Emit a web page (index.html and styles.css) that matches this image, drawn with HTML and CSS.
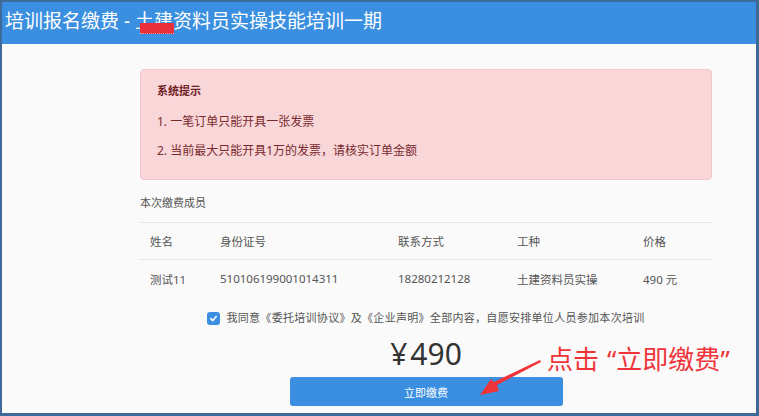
FILE: index.html
```html
<!DOCTYPE html>
<html lang="zh-CN">
<head>
  <meta charset="UTF-8">
  <meta name="viewport" content="width=device-width, initial-scale=1.0">
  <title>培训报名缴费</title>
  <link rel="stylesheet" href="styles.css">
</head>
<body>
  <div class="frame">
    <!-- Header -->
    <div class="topbar">
      培训报名缴费 - <span class="masked">土建</span>资料员实操技能培训一期
    </div>

    <div class="main">
      <!-- Notice -->
      <div class="alert">
        <p class="alert-title">系统提示</p>
        <p>1. 一笔订单只能开具一张发票</p>
        <p>2. 当前最大只能开具1万的发票，请核实订单金额</p>
      </div>

      <!-- Members -->
      <div class="section-title">本次缴费成员</div>
      <div class="members">
        <div class="row head">
          <span>姓名</span>
          <span>身份证号</span>
          <span>联系方式</span>
          <span>工种</span>
          <span>价格</span>
        </div>
        <div class="row">
          <span>测试11</span>
          <span>510106199001014311</span>
          <span>18280212128</span>
          <span>土建资料员实操</span>
          <span>490 元</span>
        </div>
      </div>

      <label class="agree">
        <span class="checkbox">
          <svg width="9" height="9" viewBox="0 0 10 10"><path d="M2 5.2 L4.2 7.3 L8 2.8" fill="none" stroke="#fff" stroke-width="1.8" stroke-linecap="round" stroke-linejoin="round"/></svg>
        </span>
        我同意《委托培训协议》及《企业声明》全部内容，自愿安排单位人员参加本次培训
      </label>

      <div class="price"><span class="yen">¥</span>490</div>
      <button class="pay">立即缴费</button>
    </div>

    <!-- Annotation -->
    <div class="note">点击<span class="q open">“</span>立即缴费<span class="q">”</span></div>
    <svg class="note-arrow" width="70" height="44" viewBox="0 0 70 44">
      <polygon points="63,5 64,7 20,30 22,36 3,40 14,24 17,27" fill="#f0353a"/>
    </svg>
  </div>
</body>
</html>
```

FILE: styles.css
```css
* {
  box-sizing: border-box;
  margin: 0;
  padding: 0;
}

body {
  font-family: "Noto Sans", "Noto Sans CJK SC", sans-serif;
  color: #555;
}

/* Window frame */
.frame {
  position: relative;
  width: 759px;
  height: 416px;
  border: 2px solid #3e6a9a;
  border-right-width: 3px;
  border-bottom-width: 3px;
  background: #fafafa;
  overflow: hidden;
}

/* Header */
.topbar {
  height: 42px;
  line-height: 38px;
  padding-left: 3px;
  background: #3b8fe0;
  color: #fff;
  font-size: 19px;
  white-space: nowrap;
}

.masked {
  position: relative;
}

.masked::after {
  content: '';
  position: absolute;
  left: 5px;
  right: -1px;
  top: 15px;
  height: 10px;
  background: #ea2f3c;
  border-bottom: 1px dotted #f6a0a6;
}

/* Content column */
.main {
  width: 572px;
  margin-left: 138px;
  padding-top: 25px;
  display: flex;
  flex-direction: column;
}

/* Notice */
.alert {
  background: #f9d6d8;
  border: 1px solid #f5c8cc;
  border-radius: 4px;
  padding: 12px 16px 19px;
  color: #7a2a2e;
  font-size: 12px;
}

.alert p {
  line-height: 18px;
}

.alert p.alert-title {
  font-size: 11px;
  font-weight: bold;
  color: #6e2226;
}

.alert p:nth-child(2) {
  margin-top: 13px;
}

.alert p:nth-child(3) {
  margin-top: 11px;
}

.section-title {
  margin-top: 15px;
  line-height: 16px;
  font-size: 11px;
  color: #555;
}

/* Members table */
.members {
  margin-top: 11px;
  font-size: 11.5px;
  color: #555;
}

.row {
  display: grid;
  grid-template-columns: 70px 178px 119px 126px 1fr;
  height: 38px;
  align-items: center;
  border-top: 1px solid #e6e6e6;
}

.row.head {
  height: 37px;
}

.row span {
  padding-left: 10px;
}

/* Agreement */
.agree {
  margin-top: 13px;
  display: flex;
  align-items: center;
  justify-content: center;
  gap: 6px;
  line-height: 16px;
  font-size: 11px;
  letter-spacing: 0.3px;
  color: #555;
}

.checkbox {
  width: 13px;
  height: 13px;
  border-radius: 3px;
  background: #3b8fe0;
  display: flex;
  align-items: center;
  justify-content: center;
}

/* Price & button */
.price {
  margin-top: 11px;
  text-align: center;
  font-size: 30px;
  line-height: 34px;
  color: #333;
}

.yen {
  margin-right: 3px;
}

.pay {
  margin: 6px auto 0;
  width: 273px;
  height: 29px;
  border: none;
  border-radius: 3px;
  background: #3b8fe0;
  color: #fff;
  font-family: inherit;
  font-size: 11px;
  cursor: pointer;
}

/* Red annotation over the screenshot */
.note {
  position: absolute;
  left: 545px;
  top: 342px;
  font-family: "Noto Sans CJK SC", sans-serif;
  font-size: 26px;
  line-height: 28px;
  color: #f0353a;
  white-space: nowrap;
}

.note .q {
  font-family: "Noto Sans", sans-serif;
}

.note .q.open {
  margin-left: 8px;
}

.note-arrow {
  position: absolute;
  left: 475px;
  top: 353px;
}
```
